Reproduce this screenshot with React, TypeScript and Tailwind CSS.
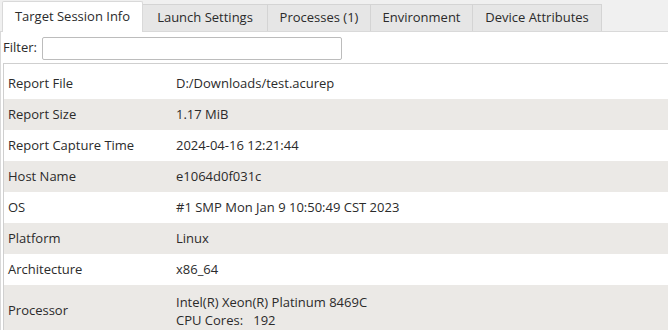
import React from "react";

const tabs = [
  { label: "Target Session Info", w: "w-[141px]" },
  { label: "Launch Settings", w: "w-[125px]" },
  { label: "Processes (1)", w: "w-[103px]" },
  { label: "Environment", w: "w-[102px]" },
  { label: "Device Attributes", w: "w-[129px]" },
];

const rows: { name: string; value: React.ReactNode; tall?: boolean }[] = [
  { name: "Report File", value: "D:/Downloads/test.acurep" },
  { name: "Report Size", value: "1.17 MiB" },
  { name: "Report Capture Time", value: "2024-04-16 12:21:44" },
  { name: "Host Name", value: "e1064d0f031c" },
  { name: "OS", value: "#1 SMP Mon Jan 9 10:50:49 CST 2023" },
  { name: "Platform", value: "Linux" },
  { name: "Architecture", value: "x86_64" },
  {
    name: "Processor",
    value: (
      <div className="flex flex-col leading-[18px]">
        <span>Intel(R) Xeon(R) Platinum 8469C</span>
        <span className="whitespace-pre">CPU Cores:   192</span>
      </div>
    ),
    tall: true,
  },
];

export default function App() {
  return (
    <div className="w-[668px] h-[330px] overflow-hidden bg-[#f0f0f0] text-[13px] text-[#2b2b2b] font-['Open_Sans','Noto_Sans',sans-serif]">
      {/* tab strip */}
      <div className="flex items-end h-[32px] pl-[2px] border-b border-[#d9d9d9]">
        {tabs.map((t, i) =>
          i === 0 ? (
            <div
              key={t.label}
              className={`${t.w} h-[31px] -mb-px bg-white border border-b-0 border-[#d9d9d9] rounded-t-[2px] flex items-center justify-center`}
            >
              {t.label}
            </div>
          ) : (
            <div
              key={t.label}
              className={`${t.w} h-[27px] bg-[#e6e6e6] border border-l-0 border-b-0 border-[#d4d4d4] flex items-center justify-center`}
            >
              {t.label}
            </div>
          )
        )}
      </div>

      <div className="bg-white h-[298px] border-l border-[#d9d9d9]">
        {/* filter */}
        <div className="flex items-center h-[31px] pl-[2px] pt-px">
          <span>Filter:</span>
          <div className="ml-[5px] w-[300px] h-[23px] border border-[#bcbcbc] rounded-[2px] bg-white" />
        </div>

        {/* property table */}
        <div className="ml-[2px] border-t border-l border-[#cfcfcf] pt-[4px]">
          {rows.map((r, i) => (
            <div
              key={r.name}
              className={`flex items-center ${r.tall ? "h-[52px]" : "h-[31px]"} ${
                i % 2 === 1 ? "bg-[#ebe9e6]" : "bg-white"
              }`}
            >
              <div className="w-[172px] pl-[4px]">{r.name}</div>
              <div className="flex-1">{r.value}</div>
            </div>
          ))}
        </div>
      </div>
    </div>
  );
}
